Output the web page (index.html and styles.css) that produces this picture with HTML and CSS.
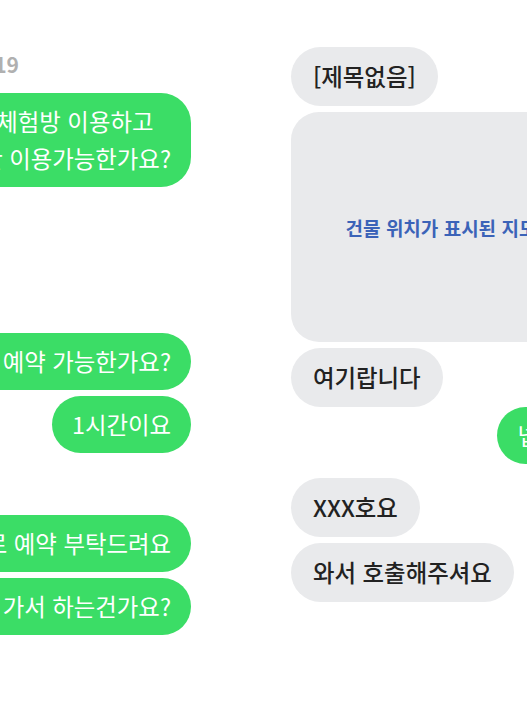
FILE: index.html
```html
<!DOCTYPE html>
<html lang="ko">
<head>
    <meta charset="UTF-8">
    <meta name="viewport" content="width=device-width, initial-scale=1.0">
    <title>채팅 내역</title>
    <link rel="stylesheet" href="styles.css">
</head>
<body>
    <div class="board">
        <!-- left chat: my messages only, the other side is out of frame -->
        <div class="chat chat_left">
            <div class="chat_date">3월 19</div>
            <div class="bubble mine first">혹시 체험방 이용하고<br>2시간 이용가능한가요?</div>
            <div class="bubble mine gap_big">오늘 저녁 7시에 예약 가능한가요?</div>
            <div class="bubble mine">1시간이요</div>
            <div class="bubble mine gap_mid">그럼 7시로 예약 부탁드려요</div>
            <div class="bubble mine">직접 찾아 가서 하는건가요?</div>
        </div>

        <!-- right chat -->
        <div class="chat chat_right">
            <div class="bubble theirs">[제목없음]</div>
            <div class="map_box">
                <span class="map_label">건물 위치가 표시된 지도</span>
            </div>
            <div class="bubble theirs">여기랍니다</div>
            <div class="bubble mine reply">넵넵!</div>
            <div class="bubble theirs gap_small">XXX호요</div>
            <div class="bubble theirs">와서 호출해주셔요</div>
        </div>
    </div>
</body>
</html>
```

FILE: styles.css
```css
body{
    margin: 0;
    background: #ffffff;
    font-family: "Noto Sans CJK KR", "Noto Sans", sans-serif;
    overflow: hidden;
}

.board{
    display: flex;
    align-items: flex-start;
    width: 527px;
    height: 703px;
    overflow: hidden;
}

.chat{
    display: flex;
    flex-direction: column;
    flex-shrink: 0;
}

.chat_left{
    width: 300px;
    margin-left: -109px; /* cut off on the left like the screenshot */
    padding-top: 51px;
    align-items: flex-end;
}

.chat_right{
    width: 300px;
    margin-left: 100px;
    padding-top: 47px;
    align-items: flex-start;
}

.chat_date{
    align-self: stretch;
    text-align: right;
    padding-right: 172px;
    color: #b0b0b0;
    font-size: 21px;
    font-weight: 700;
    line-height: 27px;
}

.bubble{
    white-space: nowrap;
    font-size: 23.4px;
    line-height: 37px;
    border-radius: 30px;
    margin-top: 6px;
}

.mine{
    background: #3bdd66;
    color: #ffffff;
    padding: 10px 20px;
}

.theirs{
    background: #e9eaec;
    color: #222222;
    font-weight: 500;
    padding: 11px 22px;
}

.first{
    margin-top: 15px;
}

.gap_big{
    margin-top: 146px;
}

.gap_mid{
    margin-top: 62px;
}

.gap_small{
    margin-top: 14px;
}

.reply{
    align-self: flex-end;
    margin-top: 0;
    margin-right: 3px;
}

.chat_right .theirs:first-child{
    margin-top: 0;
}

.map_box{
    display: flex;
    justify-content: center;
    align-items: center;
    width: 300px;
    height: 230px;
    margin-top: 6px;
    background: #e9eaec;
    border-radius: 28px;
}

.map_label{
    color: #3b63b8;
    font-size: 19px;
    font-weight: 700;
    white-space: nowrap;
}
```
